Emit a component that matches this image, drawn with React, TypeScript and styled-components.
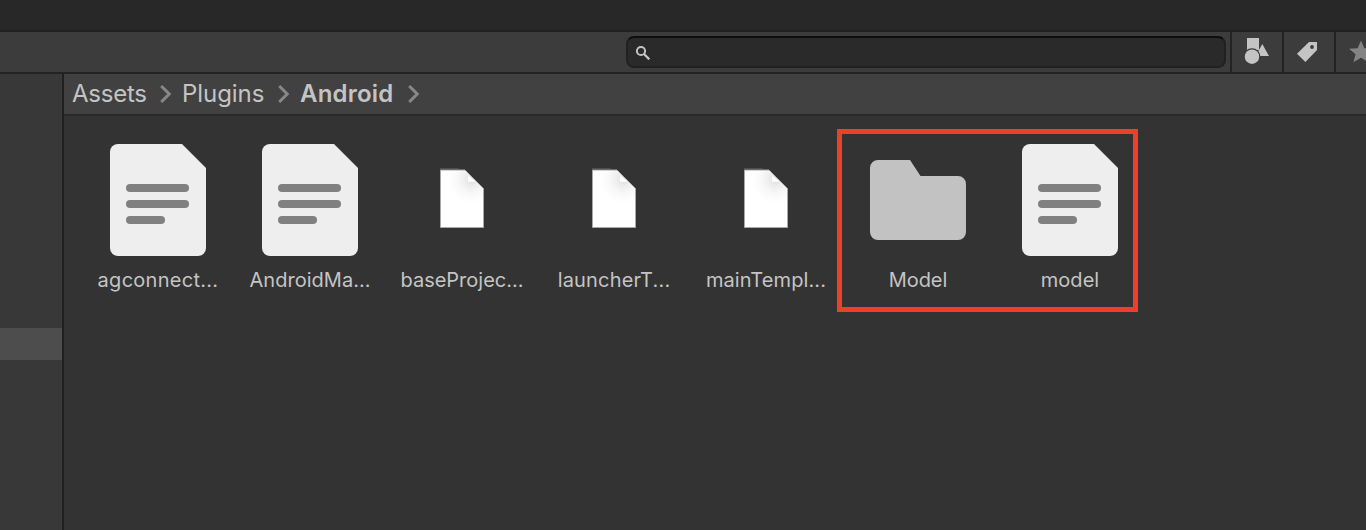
import React from "react";
import styled, { createGlobalStyle } from "styled-components";

const GlobalStyle = createGlobalStyle`
  * { box-sizing: border-box; }
  body {
    margin: 0;
    overflow: hidden;
    background: #333333;
    font-family: Inter, "Liberation Sans", sans-serif;
    color: #c4c4c4;
  }
  svg { display: block; flex: none; }
`;

const Window = styled.div`
  display: flex;
  flex-direction: column;
  width: 1366px;
  height: 530px;
  overflow: hidden;
`;

const TabStrip = styled.div`
  flex: none;
  height: 32px;
  background: #282828;
  border-bottom: 2px solid #202020;
`;

const Toolbar = styled.div`
  flex: none;
  display: flex;
  justify-content: flex-end;
  align-items: center;
  height: 42px;
  background: #3c3c3c;
  border-bottom: 2px solid #232323;
`;

const SearchField = styled.div`
  display: flex;
  align-items: center;
  width: 600px;
  height: 32px;
  margin-right: 4px;
  padding-left: 7px;
  background: #2a2a2a;
  border: 2px solid #212121;
  border-top-color: #0d0d0d;
  border-radius: 8px;
`;

const ToolButton = styled.div<{ $width?: number }>`
  flex: none;
  width: ${(p) => p.$width ?? 52}px;
  height: 40px;
  overflow: hidden;
  border-left: 2px solid #232323;
`;

const Body = styled.div`
  flex: 1;
  display: flex;
  min-height: 0;
`;

const Sidebar = styled.div`
  flex: none;
  width: 64px;
  padding-top: 254px;
  background: #383838;
  border-right: 2px solid #202020;
`;

const SelectedRow = styled.div`
  height: 32px;
  background: #4d4d4d;
`;

const Main = styled.div`
  flex: 1;
  min-width: 0;
  background: #333333;
`;

const Breadcrumbs = styled.div`
  display: flex;
  align-items: center;
  height: 42px;
  padding-left: 8px;
  background: #414141;
  border-bottom: 2px solid #292929;
`;

const Crumb = styled.span<{ $width: number; $spacing: number; $current?: boolean }>`
  width: ${(p) => p.$width}px;
  font-size: 24px;
  line-height: 40px;
  letter-spacing: ${(p) => p.$spacing}px;
  font-weight: ${(p) => (p.$current ? 600 : 400)};
  white-space: nowrap;
`;

const CrumbArrow = styled.svg`
  margin-right: 8px;
`;

const Grid = styled.div`
  display: flex;
  padding: 13px 0 0 18px;
`;

const AssetGroup = styled.div`
  display: flex;
  padding-top: 5px;
`;

const HighlightedGroup = styled.div`
  display: flex;
  width: 301px;
  height: 183px;
  margin-left: -5px;
  border: 5px solid #ee4026;
`;

const Asset = styled.div`
  flex: none;
  display: flex;
  flex-direction: column;
  align-items: center;
  width: 152px;
  padding-top: 2px;
`;

const AssetLabel = styled.span<{ $spacing: number }>`
  margin-top: 4px;
  font-size: 20px;
  font-weight: 400;
  line-height: 24px;
  letter-spacing: ${(p) => p.$spacing}px;
  white-space: nowrap;
`;

type Kind = "text" | "blank" | "folder";

function AssetIcon({ kind }: { kind: Kind }) {
  if (kind === "folder") {
    return (
      <svg width="128" height="128" viewBox="0 0 128 128">
        <path
          d="M24 24h32l10.500 16H104a8 8 0 0 1 8 8v48a8 8 0 0 1-8 8H24a8 8 0 0 1-8-8V32a8 8 0 0 1 8-8z"
          fill="#c2c2c2"
        />
      </svg>
    );
  }
  if (kind === "text") {
    return (
      <svg width="128" height="128" viewBox="0 0 128 128">
        <path
          d="M24 8h64l24 24v80a8 8 0 0 1-8 8H24a8 8 0 0 1-8-8V16a8 8 0 0 1 8-8z"
          fill="#eeeeee"
        />
        <g fill="#808080">
          <rect x="32" y="48" width="63" height="8" rx="4" />
          <rect x="32" y="64" width="63" height="8" rx="4" />
          <rect x="32" y="80" width="39" height="8" rx="4" />
        </g>
      </svg>
    );
  }
  return (
    <svg width="128" height="128" viewBox="0 0 128 128">
      <defs>
        <radialGradient id="paper" gradientUnits="userSpaceOnUse" cx="74" cy="43" r="24">
          <stop offset="0" stopColor="#d8d8d8" />
          <stop offset="0.25" stopColor="#ebebeb" />
          <stop offset="0.6" stopColor="#f8f8f8" />
          <stop offset="1" stopColor="#ffffff" />
        </radialGradient>
        <linearGradient id="fold" gradientUnits="userSpaceOnUse" x1="75" y1="40" x2="71" y2="47">
          <stop offset="0" stopColor="#e8e8e8" />
          <stop offset="0.5" stopColor="#ffffff" />
          <stop offset="1" stopColor="#f6f6f6" />
        </linearGradient>
      </defs>
      <path d="M42.500 34h24.500L85.500 52.500v39h-43z" fill="url(#paper)" stroke="#a8a8a8" />
      <path d="M42 33h19" stroke="#6a6a6a" />
      <path d="M70 39v7h5.500l2-0.800z" fill="url(#fold)" />
    </svg>
  );
}

interface AssetData {
  name: string;
  kind: Kind;
  spacing: number;
}

const files: AssetData[] = [
  { name: "agconnect...", kind: "text", spacing: 0.28 },
  { name: "AndroidMa...", kind: "text", spacing: 0.02 },
  { name: "baseProjec...", kind: "blank", spacing: 0 },
  { name: "launcherT...", kind: "blank", spacing: 0.18 },
  { name: "mainTempl...", kind: "blank", spacing: 0.1 },
];

const highlighted: AssetData[] = [
  { name: "Model", kind: "folder", spacing: -0.1 },
  { name: "model", kind: "text", spacing: 0.05 },
];

const AssetItem = ({ name, kind, spacing }: AssetData) => (
  <Asset>
    <AssetIcon kind={kind} />
    <AssetLabel $spacing={spacing}>{name}</AssetLabel>
  </Asset>
);

const Arrow = () => (
  <CrumbArrow width="20" height="40" viewBox="0 0 20 40">
    <path d="M7.200 12l8 8-8 8" fill="none" stroke="#888888" strokeWidth="3" />
  </CrumbArrow>
);

export default function App() {
  return (
    <Window>
      <GlobalStyle />
      <TabStrip />
      <Toolbar>
        <SearchField>
          <svg width="16" height="16" viewBox="0 0 16 16" fill="none" stroke="#c4c4c4">
            <circle cx="6" cy="7" r="4.100" strokeWidth="2" />
            <path d="M9 10l5.300 5.300" strokeWidth="2.400" />
          </svg>
        </SearchField>
        <ToolButton>
          <svg width="50" height="40" viewBox="0 0 50 40" fill="#c4c4c4">
            <path d="M15 6h12v12H15z" />
            <path d="M30.300 12L37 24H23.600z" />
            <circle cx="20" cy="24.700" r="8.500" fill="#3c3c3c" />
            <circle cx="20" cy="24.700" r="7.200" />
          </svg>
        </ToolButton>
        <ToolButton>
          <svg width="50" height="40" viewBox="0 0 50 40">
            <path d="M25 10h8v8L21.400 30 13 21.700z" fill="#c4c4c4" />
            <circle cx="28" cy="15" r="1.900" fill="#3c3c3c" />
          </svg>
        </ToolButton>
        <ToolButton $width={32}>
          <svg width="50" height="40" viewBox="0 0 50 40">
            <path
              d="M25 8.500l3.300 7.700 8.700.6-6.600 5.400 2.200 8-7.600-4.400-7.600 4.400 2.200-8-6.600-5.400 8.700-.6z"
              fill="#848484"
            />
          </svg>
        </ToolButton>
      </Toolbar>
      <Body>
        <Sidebar>
          <SelectedRow />
        </Sidebar>
        <Main>
          <Breadcrumbs>
            <Crumb $width={82} $spacing={-0.25}>
              Assets
            </Crumb>
            <Arrow />
            <Crumb $width={90} $spacing={-0.05}>
              Plugins
            </Crumb>
            <Arrow />
            <Crumb $width={102} $spacing={0.2} $current>
              Android
            </Crumb>
            <Arrow />
          </Breadcrumbs>
          <Grid>
            <AssetGroup>
              {files.map((f) => (
                <AssetItem key={f.name} {...f} />
              ))}
            </AssetGroup>
            <HighlightedGroup>
              {highlighted.map((f) => (
                <AssetItem key={f.name} {...f} />
              ))}
            </HighlightedGroup>
          </Grid>
        </Main>
      </Body>
    </Window>
  );
}
